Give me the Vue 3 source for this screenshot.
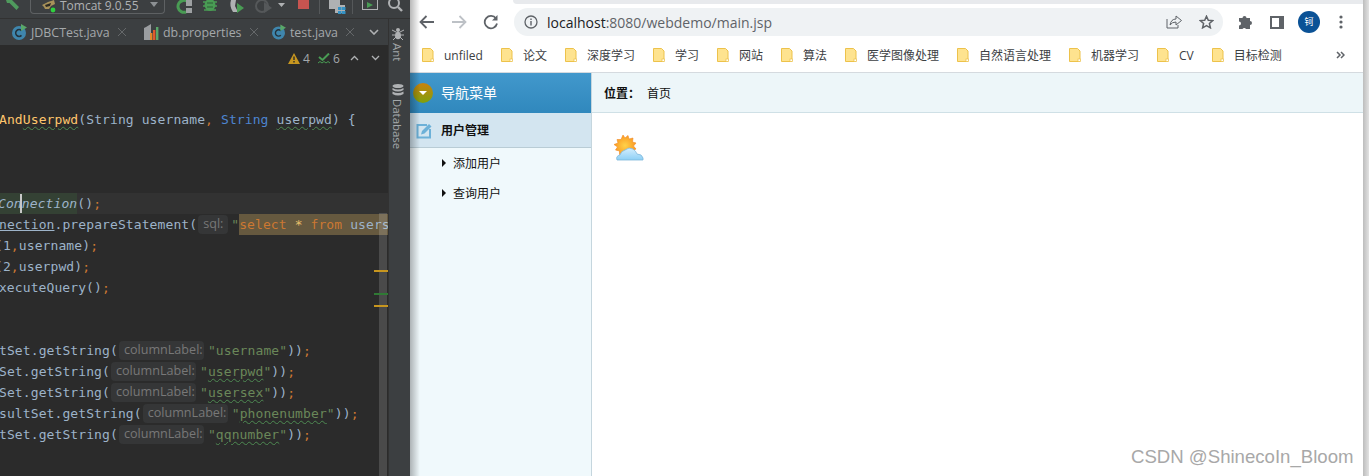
<script setup>
const tabs = [
  { name: 'JDBCTest.java', kind: 'java', width: 132 },
  { name: 'db.properties', kind: 'props', width: 128 },
  { name: 'test.java', kind: 'java', width: 82 },
]
const code = [
  { x: -1, s: [{ t: 'And', c: 'y' }, { t: 'Userpwd', c: 'y w' }, { t: '(String username' }, { t: ',', c: 'k' }, { t: ' ' }, { t: 'String', c: 'b' }, { t: ' ' }, { t: 'userpwd', c: 'w' }, { t: ') {' }] },
  {}, {}, {},
  { x: -2, cur: true, s: [{ t: 'Connection', c: 'i hl' }, { t: '()' }, { t: ';', c: 'k' }], caret: true },
  { x: -1, s: [{ t: 'nection', c: 'u' }, { t: '.prepareStatement(' }, { h: 'sql:', c: 'h-sql' }, { t: '"', c: 's' }, { t: 'select', c: 'k sel' }, { t: ' ', c: 'sel' }, { t: '*', c: 'st sel' }, { t: ' ', c: 'sel' }, { t: 'from', c: 'k sel' }, { t: ' ', c: 'sel' }, { t: 'users', c: 'sel' }] },
  { x: -5, s: [{ t: '(1' }, { t: ',', c: 'k' }, { t: 'username)' }, { t: ';', c: 'k' }] },
  { x: -5, s: [{ t: '(2' }, { t: ',', c: 'k' }, { t: 'userpwd)' }, { t: ';', c: 'k' }] },
  { x: -9, s: [{ t: 'executeQuery()' }, { t: ';', c: 'k' }] },
  {}, {},
  { x: -1, s: [{ t: 'tSet.getString(' }, { h: 'columnLabel:' }, { t: '"username"', c: 's' }, { t: '))' }, { t: ';', c: 'k' }] },
  { x: -1, s: [{ t: 'Set.getString(' }, { h: 'columnLabel:' }, { t: '"', c: 's' }, { t: 'userpwd', c: 's w' }, { t: '"', c: 's' }, { t: '))' }, { t: ';', c: 'k' }] },
  { x: -1, s: [{ t: 'Set.getString(' }, { h: 'columnLabel:' }, { t: '"', c: 's' }, { t: 'usersex', c: 's w' }, { t: '"', c: 's' }, { t: '))' }, { t: ';', c: 'k' }] },
  { x: -1, s: [{ t: 'sultSet.getString(' }, { h: 'columnLabel:' }, { t: '"', c: 's' }, { t: 'phonenumber', c: 's w' }, { t: '"', c: 's' }, { t: '))' }, { t: ';', c: 'k' }] },
  { x: -1, s: [{ t: 'tSet.getString(' }, { h: 'columnLabel:' }, { t: '"', c: 's' }, { t: 'qqnumber', c: 's w' }, { t: '"', c: 's' }, { t: '))' }, { t: ';', c: 'k' }] },
]
const bookmarks = ['unfiled', '论文', '深度学习', '学习', '网站', '算法', '医学图像处理', '自然语言处理', '机器学习', 'CV', '目标检测']
const subMenu = ['添加用户', '查询用户']
</script>

<template>
  <div class="screen">
    <section class="ide">
      <header class="ide-toolbar">
        <svg class="hammer" width="18" height="18" viewBox="0 0 18 18">
          <path d="M3 0 H9 L16 7 L13.5 10 L6.5 3 L4 3 Z" fill="#4f9a5d" />
        </svg>
        <div class="run-config">
          <svg width="16" height="14" viewBox="0 0 16 14">
            <path d="M1 5 L7 2 L13 0 L14 4 L10 6 L8 9 L4 9 L3 7 Z" fill="#a8925a" />
            <path d="M4 5 L10 3 L9 6 L5 7 Z" fill="#2d2a22" />
            <circle cx="12" cy="10" r="2.4" fill="#2fd13f" />
          </svg>
          <span class="run-name">Tomcat 9.0.55</span>
          <svg class="run-caret" width="10" height="6" viewBox="0 0 10 6"><path d="M1 0 H9 L5 5 Z" fill="#8c9093" /></svg>
        </div>
        <svg class="tool-icons" width="240" height="18" viewBox="170 0 240 18">
          <path d="M190 6 A6 6 0 1 0 186 12" fill="none" stroke="#499c54" stroke-width="3" />
          <rect x="186" y="0" width="6" height="6" fill="#9da0a2" />
          <rect x="186" y="8" width="6" height="5" fill="#9da0a2" />
          <ellipse cx="210" cy="5" rx="5.5" ry="6" fill="#499c54" />
          <path d="M203 2 H217 M203 6 H217 M204 10 H216" stroke="#499c54" stroke-width="1.6" />
          <path d="M207 3 H213 M207 7 H213" stroke="#2f5c36" stroke-width="1.2" />
          <path d="M231 0 H236 L235 6 L238 12 L233 12 Q229 6 231 0 Z" fill="#afb1b3" />
          <path d="M237 3 L244 8 L237 13 Z" fill="#499c54" />
          <circle cx="262" cy="6" r="6" fill="none" stroke="#55585a" stroke-width="2" />
          <path d="M264 2 L272 8 L264 13 Z" fill="#55585a" />
          <path d="M278 3 H285 L281.5 7 Z" fill="#afb1b3" />
          <rect x="298" y="0" width="11" height="9" fill="#c75450" />
          <rect x="319" y="0" width="1" height="14" fill="#55585a" />
          <path d="M329 0 H340 V5 H345 V13 H335 V9 H329 Z" fill="#afb1b3" />
          <rect x="338" y="7" width="3.5" height="3" fill="#3592c4" />
          <rect x="342" y="7" width="3.5" height="3" fill="#3592c4" />
          <rect x="338" y="11" width="3.5" height="3" fill="#3592c4" />
          <rect x="342" y="11" width="3.5" height="3" fill="#3592c4" />
          <rect x="352" y="0" width="1" height="14" fill="#55585a" />
          <rect x="362.5" y="-2" width="15" height="11.5" fill="none" stroke="#afb1b3" />
          <path d="M367 2 L373 5 L367 8 Z" fill="#499c54" />
          <circle cx="394" cy="3" r="5" fill="none" stroke="#afb1b3" stroke-width="2" />
          <path d="M398 7 L402 11" stroke="#afb1b3" stroke-width="2.4" />
        </svg>
      </header>

      <div class="ide-body">
        <div class="ide-main">
          <nav class="tabs">
            <div v-for="tab in tabs" :key="tab.name" class="tab" :style="{ width: tab.width + 'px' }">
              <svg v-if="tab.kind === 'java'" width="15" height="16" viewBox="0 0 15 16">
                <circle cx="7" cy="9" r="7" fill="#3f86ad" />
                <path d="M9.5 6.6 A3.4 3.4 0 1 0 9.5 11.4" fill="none" stroke="#23323c" stroke-width="1.5" />
                <path d="M9 0 L15 3.5 L9 7 Z" fill="#59a869" />
              </svg>
              <svg v-else width="15" height="16" viewBox="0 0 15 16">
                <path d="M2 3 L7 0 V16 H0 V4 Z" fill="#9a9da0" />
                <rect x="6" y="9" width="2.4" height="7" fill="#e08a2c" />
                <rect x="9" y="6" width="2.4" height="10" fill="#e05a2c" />
                <rect x="12" y="3" width="2.4" height="13" fill="#59a869" />
              </svg>
              <span class="tab-name">{{ tab.name }}</span>
              <svg class="tab-close" width="8" height="8" viewBox="0 0 8 8"><path d="M0 0 L8 8 M8 0 L0 8" stroke="#65686a" stroke-width="1" /></svg>
            </div>
            <svg class="tabs-more" width="10" height="6" viewBox="0 0 10 6"><path d="M1 1 L5 5 L9 1" fill="none" stroke="#afb1b3" stroke-width="1.6" /></svg>
          </nav>

          <div class="editor">
            <div
              v-for="(row, i) in code"
              :key="i"
              class="code-row"
              :class="{ current: row.cur }"
            >
              <div class="code-line" :style="{ marginLeft: (row.x || 0) + 'px' }">
                <template v-for="(seg, j) in row.s" :key="j">
                  <span v-if="seg.h" class="hint" :class="seg.c">{{ seg.h }}</span>
                  <span v-else class="seg" :class="seg.c">{{ seg.t }}</span>
                </template>
              </div>
              <i v-if="row.caret" class="caret"></i>
            </div>

            <div class="inspect">
              <svg width="12" height="11" viewBox="0 0 12 11"><path d="M6 0 L12 11 H0 Z" fill="#c7961f" /><path d="M6 3.5 V7 M6 8 V9.6" stroke="#2b2b2b" stroke-width="1.4" /></svg>
              <span class="inspect-num">4</span>
              <svg class="inspect-ok" width="12" height="11" viewBox="0 0 12 11"><path d="M1 4 L4.5 7 L11 0.5" fill="none" stroke="#499c54" stroke-width="2" /><path d="M0 10 L2 8.5 L4 10 L6 8.5 L8 10 L10 8.5 L12 10" fill="none" stroke="#499c54" stroke-width="1" /></svg>
              <span class="inspect-num">6</span>
              <svg class="inspect-up" width="9" height="6" viewBox="0 0 9 6"><path d="M1 5 L4.5 1.5 L8 5" fill="none" stroke="#afb1b3" stroke-width="1.3" /></svg>
              <svg class="inspect-down" width="9" height="6" viewBox="0 0 9 6"><path d="M1 1 L4.5 4.5 L8 1" fill="none" stroke="#afb1b3" stroke-width="1.3" /></svg>
            </div>

            <div class="thumb"></div>
            <i class="mark mark-a"></i>
            <i class="mark mark-b"></i>
            <i class="mark mark-c"></i>
          </div>
        </div>

        <aside class="tool-strip">
          <svg class="strip-ant" width="12" height="13" viewBox="0 0 12 13">
            <ellipse cx="6" cy="3" rx="2" ry="2" fill="#afb1b3" />
            <ellipse cx="6" cy="8.5" rx="3" ry="3.8" fill="#afb1b3" />
            <path d="M0 3 L4 5 M12 3 L8 5 M0 8 H3 M12 8 H9 M1 13 L4 10 M11 13 L8 10" stroke="#afb1b3" />
          </svg>
          <span class="strip-label">Ant</span>
          <svg class="strip-db" width="12" height="12" viewBox="0 0 12 12">
            <ellipse cx="6" cy="2" rx="5.5" ry="2" fill="#afb1b3" />
            <path d="M0.5 4 Q6 7 11.5 4 V6 Q6 9 0.5 6 Z M0.5 7.5 Q6 10.5 11.5 7.5 V10 Q6 13 0.5 10 Z" fill="#afb1b3" />
          </svg>
          <span class="strip-label">Database</span>
        </aside>
      </div>
    </section>

    <section class="browser">
      <div class="tab-strip"><div class="tab-fill"></div></div>
      <div class="browser-bar">
        <svg class="nav-back" width="16" height="14" viewBox="0 0 16 14"><path d="M15 7 H2 M7.5 1 L1.5 7 L7.5 13" fill="none" stroke="#5f6368" stroke-width="1.8" /></svg>
        <svg class="nav-fwd" width="16" height="14" viewBox="0 0 16 14"><path d="M1 7 H14 M8.5 1 L14.5 7 L8.5 13" fill="none" stroke="#bdc1c6" stroke-width="1.8" /></svg>
        <svg class="nav-reload" width="16" height="16" viewBox="0 0 16 16"><path d="M13 4.5 A6.2 6.2 0 1 0 14 9.5" fill="none" stroke="#5f6368" stroke-width="1.8" /><path d="M14.5 1 V6.5 H9 Z" fill="#5f6368" /></svg>
        <div class="omnibox">
          <svg class="omni-info" width="14" height="14" viewBox="0 0 14 14"><circle cx="7" cy="7" r="6" fill="none" stroke="#5f6368" stroke-width="1.3" /><path d="M7 6 V10.5 M7 3.5 V5" stroke="#5f6368" stroke-width="1.4" /></svg>
          <span class="url"><span class="url-host">localhost</span>:8080/webdemo/main.jsp</span>
          <svg class="omni-share" width="16" height="14" viewBox="0 0 16 14"><path d="M1 4 V13 H12 V10" fill="none" stroke="#5f6368" /><path d="M4 10 Q5 4 10 4 V1 L15.5 5.5 L10 10 V7 Q6 7 4 10 Z" fill="none" stroke="#5f6368" /></svg>
          <svg class="omni-star" width="15" height="14" viewBox="0 0 15 14"><path d="M7.5 1.2 L9.3 5.2 L13.7 5.6 L10.4 8.5 L11.4 12.8 L7.5 10.5 L3.6 12.8 L4.6 8.5 L1.3 5.6 L5.7 5.2 Z" fill="none" stroke="#5f6368" stroke-width="1.5" /></svg>
        </div>
        <svg class="bar-puzzle" width="15" height="14" viewBox="0 0 15 14"><path d="M1 3 H4.5 A2 2 0 0 1 8.5 3 H12 V6 A2 2 0 0 1 12 10 V14 H8 A2 2 0 0 0 4.5 14 H1 V10.5 A2 2 0 0 0 1 6.5 Z" fill="#5f6368" /></svg>
        <svg class="bar-panel" width="14" height="13" viewBox="0 0 14 13"><rect x="1" y="1" width="12" height="11" fill="#fff" stroke="#5f6368" stroke-width="2" /><rect x="9" y="1" width="4" height="11" fill="#5f6368" /></svg>
        <div class="avatar">钶</div>
        <svg class="bar-menu" width="4" height="14" viewBox="0 0 4 14"><circle cx="2" cy="2" r="1.6" fill="#5f6368" /><circle cx="2" cy="7" r="1.6" fill="#5f6368" /><circle cx="2" cy="12" r="1.6" fill="#5f6368" /></svg>
      </div>

      <div class="bookmarks">
        <div v-for="mark in bookmarks" :key="mark" class="bookmark">
          <svg width="12" height="14" viewBox="0 0 12 14"><path d="M0.5 0.5 H8.5 L11 3 V13.5 H0.5 Z" fill="#fee38f" stroke="#edc24b" /><rect x="9" y="11" width="2.5" height="2.5" fill="#fff" stroke="#edc24b" stroke-width="0.7" /></svg>
          <span>{{ mark }}</span>
        </div>
        <svg class="more" width="9" height="8" viewBox="0 0 9 8"><path d="M1 1 L4 4 L1 7 M5 1 L8 4 L5 7" fill="none" stroke="#5f6368" stroke-width="1.5" /></svg>
      </div>

      <div class="page">
        <aside class="side">
          <div class="side-head">
            <span class="head-dot"><i class="head-tri"></i></span>
            <span class="head-title">导航菜单</span>
          </div>
          <div class="side-group">
            <svg width="17" height="17" viewBox="0 0 17 17">
              <path d="M11 3 H1.5 V15.5 H14 V7" fill="none" stroke="#6db1d8" stroke-width="2" />
              <path d="M5 12.5 L6 9 L13 2 L15.5 4.5 L8.5 11.5 Z" fill="#6db1d8" />
            </svg>
            <span>用户管理</span>
          </div>
          <div v-for="item in subMenu" :key="item" class="side-item">
            <i class="item-tri"></i>
            <span>{{ item }}</span>
          </div>
        </aside>
        <main class="content">
          <div class="crumb">
            <b>位置：</b>
            <span>首页</span>
          </div>
          <svg class="weather" width="32" height="28" viewBox="0 0 32 28">
            <defs>
              <radialGradient id="sunFill" cx="0.5" cy="0.5" r="0.6"><stop offset="0" stop-color="#ffd24a" /><stop offset="1" stop-color="#f98e1a" /></radialGradient>
              <linearGradient id="cloudFill" x1="0" y1="0" x2="0" y2="1"><stop offset="0" stop-color="#d4eefd" /><stop offset="1" stop-color="#8dd0f6" /></linearGradient>
            </defs>
            <path d="M11 1 L13 4 L16 1.5 L17 5 L21 4 L20.5 8 L24 9 L21.5 12 L24 15 L20 17 L20 21 L16 19 L13 22 L11 19 L7.5 20.5 L7.5 17 L3.5 16 L5.5 13 L2 10.5 L6 9 L5 5.5 L9 5.5 Z" fill="url(#sunFill)" stroke="#f08a24" stroke-width="0.6" />
            <path d="M5 26 Q3.5 22 8 21 Q9 17 13 16 Q17 12.5 21 15 Q24 17 25 20 Q30 20 31 24 L31 26 Z" fill="url(#cloudFill)" stroke="#7fb8da" stroke-width="0.8" />
          </svg>
        </main>
      </div>
      <i class="browser-shadow"></i>
      <div class="watermark">CSDN @ShinecoIn_Bloom</div>
    </section>
    <div class="screen-edge"></div>
  </div>
</template>

<style>
html, body { margin: 0; padding: 0; background: #fff; overflow: hidden; }
</style>

<style scoped>
.screen { display: flex; width: 1369px; height: 476px; overflow: hidden; font-family: "Open Sans", "Noto Sans CJK SC", sans-serif; }

/* IDE */
.ide { width: 410px; flex: none; display: flex; flex-direction: column; background: #3c3f41; }
.ide-toolbar { height: 18px; flex: none; display: flex; align-items: flex-start; border-bottom: 1px solid #323232; overflow: hidden; }
.hammer { margin-left: 3px; flex: none; }
.run-config { margin-left: 9px; width: 135px; height: 14px; box-sizing: border-box; flex: none; display: flex; align-items: flex-start; border: 1px solid #5e6163; border-top: none; border-radius: 0 0 4px 4px; padding-left: 10px; }
.run-name { margin-left: 3px; font-size: 12px; line-height: 11px; color: #afb1b3; white-space: nowrap; }
.run-caret { margin: 2px 0 0 10px; }
.tool-icons { margin-left: 5px; flex: none; }
.ide-body { flex: 1; display: flex; min-height: 0; }
.ide-main { width: 388px; flex: none; display: flex; flex-direction: column; }
.tabs { height: 26px; flex: none; display: flex; align-items: center; padding: 0 9px 0 12px; }
.tab { display: flex; align-items: center; flex: none; box-sizing: border-box; }
.tab-name { margin-left: 4px; font-size: 12.4px; color: #a4a8ab; white-space: nowrap; }
.tab-close { margin-left: 8px; flex: none; }
.tabs-more { margin-left: auto; flex: none; }
.editor { flex: 1; position: relative; overflow: hidden; background: #2b2b2b; padding-top: 64px; min-height: 0; }
.code-row { height: 21px; position: relative; overflow: hidden; }
.code-row.current { background: #323232; }
.code-line { display: flex; align-items: center; height: 21px; font-family: "DejaVu Sans Mono", monospace; font-size: 13px; letter-spacing: 0.1px; color: #9db3c9; white-space: pre; }
.seg { line-height: 21px; flex: none; }
.seg.y { color: #ffc66d; }
.seg.k { color: #cc7832; }
.seg.b { color: #4d85d1; }
.seg.s { color: #6a8759; }
.seg.st { color: #e8bf6a; }
.seg.i { font-style: italic; }
.seg.hl { background: #344134; }
.seg.sel { background: #66593f; }
.seg.u { text-decoration: underline; }
.seg.w { text-decoration: underline wavy #4e8a52 1px; text-underline-offset: 2px; }
.hint { flex: none; box-sizing: border-box; height: 19px; line-height: 18px; width: 85px; margin: 0 4px 0 1px; padding-left: 5px; background: #353637; border-radius: 4px; color: #787878; font-family: "Open Sans", sans-serif; font-size: 12.6px; letter-spacing: 0; }
.hint.h-sql { width: 30px; margin: 0 3px 0 1px; }
.caret { position: absolute; left: 20px; top: 1px; width: 2px; height: 19px; background: #c8c8c8; }
.inspect { position: absolute; left: 288px; top: 5px; height: 16px; display: flex; align-items: center; }
.inspect-num { margin-left: 3px; font-size: 12px; color: #a4a8ab; }
.inspect-ok { margin-left: 8px; }
.inspect-up { margin-left: 10px; }
.inspect-down { margin-left: 12px; }
.thumb { position: absolute; left: 379px; top: 168px; width: 8px; bottom: 0; background: rgba(255, 255, 255, 0.15); }
.mark { position: absolute; left: 374px; width: 14px; height: 2px; background: #c7961f; }
.mark-a { top: 225px; }
.mark-b { top: 248px; background: #2f7a34; }
.mark-c { top: 260px; }
.tool-strip { flex: 1; display: flex; flex-direction: column; align-items: center; border-left: 1px solid #323232; padding: 8px 3px 0 0; }
.strip-label { writing-mode: vertical-rl; font-size: 11.4px; color: #a4a8ab; margin: 3px 3px 0 0; line-height: 14px; }
.strip-db { margin-top: 23px; }

/* browser */
.browser { flex: 1; position: relative; display: flex; flex-direction: column; background: #fff; min-width: 0; }
.tab-strip { height: 4px; flex: none; padding-left: 103px; }
.tab-fill { height: 4px; background: #e8eaed; border-radius: 0 0 0 6px; }
.browser-bar { height: 34px; flex: none; box-sizing: border-box; padding-top: 2px; display: flex; align-items: center; }
.nav-back { margin-left: 9px; flex: none; }
.nav-fwd { margin-left: 16px; flex: none; }
.nav-reload { margin-left: 16px; flex: none; }
.omnibox { margin-left: 15px; width: 709px; height: 28px; flex: none; display: flex; align-items: center; background: #eff2f4; border-radius: 14px; }
.omni-info { margin-left: 10px; flex: none; }
.url { margin-left: 9px; font-size: 14px; color: #5f6368; white-space: nowrap; flex: 1; }
.url-host { color: #202124; }
.omni-share { flex: none; }
.omni-star { margin: 0 9px 0 17px; flex: none; }
.bar-puzzle { margin-left: 15px; flex: none; }
.bar-panel { margin-left: 17px; flex: none; }
.avatar { margin-left: 14px; width: 22px; height: 22px; flex: none; border-radius: 50%; background: #0b5296; color: #fff; font-size: 9px; line-height: 22px; text-align: center; }
.bar-menu { margin-left: 19px; flex: none; }
.bookmarks { height: 35px; flex: none; box-sizing: border-box; display: flex; align-items: center; gap: 18px; padding-left: 12px; border-bottom: 1px solid #d5dadf; position: relative; }
.bookmark { display: flex; align-items: center; gap: 10px; font-size: 12px; color: #3c4043; white-space: nowrap; }
.more { position: absolute; left: 926px; top: 13px; }
.page { flex: 1; display: flex; min-height: 0; }
.side { width: 182px; flex: none; box-sizing: border-box; background: #f0f9fc; border-right: 1px solid #c5d6de; }
.side-head { height: 40px; display: flex; align-items: center; gap: 8px; padding-left: 3px; background: linear-gradient(#4298cc, #3088bd); color: #fff; font-size: 14px; font-weight: 400; }
.head-title { margin-top: -2px; }
.head-dot { width: 20px; height: 20px; border-radius: 50%; display: flex; align-items: center; justify-content: center; background: linear-gradient(#c8820f, #7fa00c); }
.head-tri { width: 0; height: 0; border: 4px solid transparent; border-top: 4px solid #fff; border-bottom: 0; }
.side-group { height: 35px; box-sizing: border-box; display: flex; align-items: center; gap: 8px; padding-left: 6px; background: #d3e5f0; border-bottom: 1px solid #b9ccd5; font-size: 12px; font-weight: 700; color: #111; }
.side-item { height: 30px; display: flex; align-items: center; gap: 7px; padding-left: 32px; font-size: 12px; color: #111; }
.item-tri { width: 0; height: 0; border: 4px solid transparent; border-left: 4px solid #111; border-right: 0; }
.content { flex: 1; min-width: 0; }
.crumb { height: 40px; box-sizing: border-box; display: flex; align-items: center; gap: 7px; padding-left: 12px; background: #edf6f9; border-bottom: 1px solid #cfe0e6; font-size: 12px; color: #111; }
.crumb b { font-weight: 700; }
.weather { display: block; margin: 21px 0 0 20px; }
.browser-shadow { position: absolute; left: 0; top: 0; bottom: 0; width: 10px; background: linear-gradient(to right, rgba(0, 0, 0, 0.28), rgba(0, 0, 0, 0)); pointer-events: none; }
.watermark { position: absolute; left: 721px; top: 445px; font-family: "Liberation Sans", sans-serif; font-size: 18.6px; line-height: 24px; color: #a8a8a8; white-space: nowrap; }
.screen-edge { width: 6px; flex: none; background: linear-gradient(to right, #bdbdbd, #e2e2e2); }
</style>
